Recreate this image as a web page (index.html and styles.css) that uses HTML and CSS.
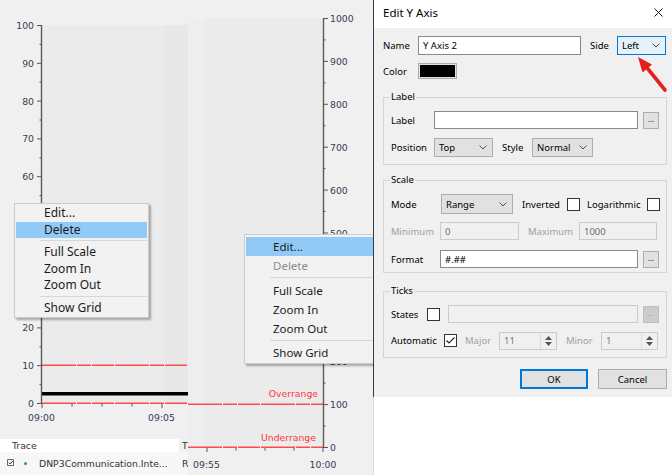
FILE: index.html
```html
<!DOCTYPE html>
<html lang="en">
<head>
<meta charset="utf-8">
<title>Edit Y Axis</title>
<link rel="stylesheet" href="styles.css">
</head>
<body>
<div class="screen">

  <section class="panel panel-left">
    <svg class="chart" width="188" height="439" viewBox="0 0 188 439">
      <rect x="42" y="25" width="146" height="378" fill="#ebebeb"/>
      <rect x="163" y="25" width="25" height="378" fill="#e8e8e8"/>
      <path class="limit" d="M42 365.2H188"/>
      <rect x="42" y="392" width="146" height="3.5" fill="#000"/>
      <path class="limit" d="M42 403.2H188"/>
      <path class="axis" d="M41.5 25V404"/>
      <path class="tick" d="M37 403.5H41M37 365.7H41M37 327.9H41M37 290.1H41M37 252.3H41M37 214.5H41M37 176.7H41M37 138.9H41M37 101.1H41M37 63.3H41M37 25.5H41"/>
      <path class="tick" d="M39.5 384.6H41M39.5 346.8H41M39.5 309H41M39.5 271.2H41M39.5 233.4H41M39.5 195.6H41M39.5 157.8H41M39.5 120H41M39.5 82.2H41M39.5 44.4H41"/>
      <path class="tick" d="M42 404v4M72 404v2.5M102 404v2.5M132 404v2.5M162 404v4"/>
      <text x="34" y="407" text-anchor="end">0</text>
      <text x="34" y="369.2" text-anchor="end">10</text>
      <text x="34" y="331.4" text-anchor="end">20</text>
      <text x="34" y="293.6" text-anchor="end">30</text>
      <text x="34" y="255.8" text-anchor="end">40</text>
      <text x="34" y="218" text-anchor="end">50</text>
      <text x="34" y="180.2" text-anchor="end">60</text>
      <text x="34" y="142.4" text-anchor="end">70</text>
      <text x="34" y="104.6" text-anchor="end">80</text>
      <text x="34" y="66.8" text-anchor="end">90</text>
      <text x="34" y="29" text-anchor="end">100</text>
      <text x="41.5" y="421" text-anchor="middle">09:00</text>
      <text x="161.5" y="421" text-anchor="middle">09:05</text>
    </svg>
    <div class="trace-table">
      <div class="trace-head">
        <span class="col-trace">Trace</span>
        <span class="col-t">T</span>
      </div>
      <div class="trace-row">
        <span class="col-trace">
          <svg class="trace-check" width="8" height="8" viewBox="0 0 8 8"><path d="M0.5 0.5H6.5V6.5H0.5Z" fill="#fff" stroke="#666"/><path d="M1.8 3.6L3.2 5L5.6 2" fill="none" stroke="#333" stroke-width="1"/></svg>
          <span class="trace-dot"></span>
          <span class="trace-name">DNP3Communication.Inte...</span>
        </span>
        <span class="col-t">R</span>
      </div>
    </div>

    <div class="ctx-menu menu-a">
      <div class="menu-item">Edit...</div>
      <div class="menu-item is-active">Delete</div>
      <div class="menu-sep"></div>
      <div class="menu-item">Full Scale</div>
      <div class="menu-item">Zoom In</div>
      <div class="menu-item">Zoom Out</div>
      <div class="menu-sep"></div>
      <div class="menu-item">Show Grid</div>
    </div>
  </section>

  <section class="panel panel-mid">
    <svg class="chart" width="185" height="475" viewBox="0 0 185 475">
      <rect x="0" y="19" width="135" height="428" fill="#ebebeb"/>
      <rect x="0" y="19" width="17" height="428" fill="#eeeeee"/>
      <path class="limit" d="M0 404.2H135"/>
      <path class="limit" d="M0 447.2H135"/>
      <path class="axis" d="M135.5 18V448"/>
      <path class="tick" d="M136 447.5H140M136 404.6H140M136 361.7H140M136 318.8H140M136 275.9H140M136 233H140M136 190.1H140M136 147.2H140M136 104.3H140M136 61.4H140M136 18.5H140"/>
      <path class="tick" d="M136 426H137.5M136 383.1H137.5M136 340.2H137.5M136 297.3H137.5M136 254.4H137.5M136 211.5H137.5M136 168.6H137.5M136 125.7H137.5M136 82.8H137.5M136 39.9H137.5"/>
      <path class="tick" d="M19 448v4M48 448v2.5M77 448v2.5M106 448v2.5M135 448v4"/>
      <text x="142" y="451">0</text>
      <text x="142" y="408.1">100</text>
      <text x="142" y="365.2">200</text>
      <text x="142" y="322.3">300</text>
      <text x="142" y="279.4">400</text>
      <text x="142" y="236.5">500</text>
      <text x="142" y="193.6">600</text>
      <text x="142" y="150.7">700</text>
      <text x="142" y="107.8">800</text>
      <text x="142" y="64.9">900</text>
      <text x="142" y="22">1000</text>
      <text class="warn" x="130" y="397" text-anchor="end">Overrange</text>
      <text class="warn" x="128" y="441" text-anchor="end">Underrange</text>
      <text x="18.5" y="468" text-anchor="middle">09:55</text>
      <text x="135" y="468" text-anchor="middle">10:00</text>
    </svg>

    <div class="ctx-menu menu-b">
      <div class="menu-item is-active">Edit...</div>
      <div class="menu-item is-disabled">Delete</div>
      <div class="menu-sep"></div>
      <div class="menu-item">Full Scale</div>
      <div class="menu-item">Zoom In</div>
      <div class="menu-item">Zoom Out</div>
      <div class="menu-sep sep-short"></div>
      <div class="menu-item">Show Grid</div>
    </div>
  </section>

  <section class="panel panel-right">
    <div class="dialog">
      <div class="titlebar">
        <span class="title">Edit Y Axis</span>
        <svg class="close-x" width="9" height="9" viewBox="0 0 9 9"><path d="M0.5 0.5L8.5 8.5M8.5 0.5L0.5 8.5" stroke="#111" stroke-width="1"/></svg>
      </div>
      <div class="dlg-body">
        <div class="row row-name">
          <span class="lbl lbl-name">Name</span>
          <div class="textbox tb-name">Y Axis 2</div>
          <span class="lbl lbl-side">Side</span>
          <div class="combo combo-focus combo-side"><span>Left</span><svg class="chev" width="8" height="5" viewBox="0 0 8 5"><path d="M0.5 0.5L4 4L7.5 0.5" fill="none" stroke="#444"/></svg></div>
        </div>
        <div class="row row-color">
          <span class="lbl lbl-name">Color</span>
          <div class="swatch"><span class="swatch-fill"></span></div>
        </div>

        <fieldset class="group group-label">
          <legend>Label</legend>
          <div class="row r18">
            <span class="lbl w43">Label</span>
            <div class="textbox tb-label"></div>
            <div class="dots">...</div>
          </div>
          <div class="row r19 mt9">
            <span class="lbl w43">Position</span>
            <div class="combo combo-pos"><span>Top</span><svg class="chev" width="8" height="5" viewBox="0 0 8 5"><path d="M0.5 0.5L4 4L7.5 0.5" fill="none" stroke="#555"/></svg></div>
            <span class="lbl lbl-style">Style</span>
            <div class="combo combo-style"><span>Normal</span><svg class="chev" width="8" height="5" viewBox="0 0 8 5"><path d="M0.5 0.5L4 4L7.5 0.5" fill="none" stroke="#555"/></svg></div>
          </div>
        </fieldset>

        <fieldset class="group group-scale">
          <legend>Scale</legend>
          <div class="row r20">
            <span class="lbl w50">Mode</span>
            <div class="combo combo-mode"><span>Range</span><svg class="chev" width="8" height="5" viewBox="0 0 8 5"><path d="M0.5 0.5L4 4L7.5 0.5" fill="none" stroke="#555"/></svg></div>
            <span class="lbl lbl-inv">Inverted</span>
            <span class="check"></span>
            <span class="lbl lbl-log">Logarithmic</span>
            <span class="check"></span>
          </div>
          <div class="row r18 mt8">
            <span class="lbl w49 is-off">Minimum</span>
            <div class="textbox tb-off tb-min">0</div>
            <span class="lbl lbl-max is-off">Maximum</span>
            <div class="textbox tb-off tb-max">1000</div>
          </div>
          <div class="row r18 mt10">
            <span class="lbl w49">Format</span>
            <div class="textbox tb-format">#.##</div>
            <div class="dots">...</div>
          </div>
        </fieldset>

        <fieldset class="group group-ticks">
          <legend>Ticks</legend>
          <div class="row r18">
            <span class="lbl w36">States</span>
            <span class="check"></span>
            <div class="textbox tb-off tb-states"></div>
            <div class="dots dots-off">...</div>
          </div>
          <div class="row r19 mt8">
            <span class="lbl w53">Automatic</span>
            <span class="check"><svg width="11" height="11" viewBox="0 0 11 11"><path d="M1.5 5.5L4 8L9.5 2.5" fill="none" stroke="#222" stroke-width="1.1"/></svg></span>
            <span class="lbl lbl-major is-off">Major</span>
            <div class="spin spin-major"><span class="spin-val">11</span><span class="spin-btns"><svg width="7" height="4" viewBox="0 0 7 4"><path d="M0 4L3.5 0L7 4Z" fill="#555"/></svg><svg width="7" height="4" viewBox="0 0 7 4"><path d="M0 0L3.5 4L7 0Z" fill="#555"/></svg></span></div>
            <span class="lbl lbl-minor is-off">Minor</span>
            <div class="spin spin-minor"><span class="spin-val">1</span><span class="spin-btns"><svg width="7" height="4" viewBox="0 0 7 4"><path d="M0 4L3.5 0L7 4Z" fill="#555"/></svg><svg width="7" height="4" viewBox="0 0 7 4"><path d="M0 0L3.5 4L7 0Z" fill="#555"/></svg></span></div>
          </div>
        </fieldset>

        <div class="buttons">
          <div class="btn btn-default">OK</div>
          <div class="btn">Cancel</div>
        </div>
      </div>
    </div>
    <div class="below"></div>
    <svg class="callout-arrow" width="42" height="45" viewBox="0 0 42 45">
      <path d="M35 40L18 19" stroke="#e3201f" stroke-width="3.6" stroke-linecap="round"/>
      <path d="M8 7L22 14.5L12.5 22.5Z" fill="#e3201f"/>
    </svg>
  </section>

</div>
</body>
</html>
```

FILE: styles.css
```css
* { box-sizing: border-box; }

html, body {
  margin: 0;
  padding: 0;
  background: #ffffff;
}

body {
  width: 672px;
  height: 475px;
  overflow: hidden;
  font-family: "Noto Sans", "Liberation Sans", sans-serif;
  color: #000;
}

.screen {
  display: flex;
  width: 672px;
  height: 475px;
}

.panel {
  position: relative;
  flex: none;
  height: 475px;
  background: #f0f0f0;
}

.panel-left {
  width: 188px;
  display: flex;
  flex-direction: column;
}

.panel-mid {
  width: 185px;
  overflow: hidden;
}

.panel-right {
  width: 299px;
  display: flex;
  flex-direction: column;
  background: #ffffff;
}

/* ---------- charts ---------- */
.chart { display: block; flex: none; }

.chart text {
  font-family: "DejaVu Sans", Verdana, sans-serif;
  font-size: 9.3px;
  fill: #3a3a55;
}

.chart .warn { fill: #ff3447; }

.chart .axis {
  stroke: #5a5a5a;
  stroke-width: 1.4;
  fill: none;
}

.chart .tick {
  stroke: #555;
  stroke-width: 1;
  fill: none;
}

.chart .limit {
  stroke: #ff4a4a;
  stroke-width: 1.5;
  stroke-dasharray: 34 1 14 1 22 1;
  fill: none;
}

/* ---------- trace table ---------- */
.trace-table {
  font-family: "DejaVu Sans", Verdana, sans-serif;
  font-size: 9.3px;
  color: #333;
}

.trace-head {
  display: flex;
  height: 13px;
  align-items: center;
}

.trace-head .col-trace {
  background: #fff;
  height: 13px;
  line-height: 13px;
  padding-left: 12px;
}

.trace-row {
  display: flex;
  height: 23px;
  align-items: center;
  background: #f7f7f7;
}

.col-trace {
  width: 179px;
  display: flex;
  align-items: center;
}

.col-t {
  width: 9px;
  padding-left: 3px;
}

.trace-row .col-trace { padding-left: 7px; }

.trace-check { flex: none; margin-top: -1px; }

.trace-dot {
  width: 3px;
  height: 3px;
  border-radius: 50%;
  background: #22a33a;
  margin-left: 9px;
  flex: none;
}

.trace-name { margin-left: 12px; white-space: nowrap; }

/* ---------- context menus ---------- */
.ctx-menu {
  position: absolute;
  background: #f2f2f2;
  border: 1px solid #cccccc;
  box-shadow: 2px 2px 2px rgba(0, 0, 0, 0.3);
  color: #1b1b1b;
  white-space: nowrap;
}

.menu-a {
  left: 14px;
  top: 203px;
  width: 135px;
  padding: 1px 1px;
  font-size: 12px;
}

.menu-a .menu-item {
  height: 16.5px;
  line-height: 16.5px;
  padding-left: 28px;
}

.menu-b {
  left: 56px;
  top: 234px;
  width: 131px;
  padding: 2px 1px 1px;
  font-size: 11.5px;
}

.menu-b .menu-item {
  height: 19px;
  line-height: 19px;
  padding-left: 27px;
}

.menu-item.is-active { background: #91c9f7; }
.menu-item.is-disabled { color: #8b8b8b; }

.menu-sep {
  height: 6px;
  position: relative;
}

.menu-sep::after {
  content: "";
  position: absolute;
  left: 24px;
  right: 0;
  top: 2px;
  border-top: 1px solid #d7d7d7;
}

.menu-sep.sep-short { height: 5px; }

/* ---------- dialog ---------- */
.dialog {
  height: 397px;
  flex: none;
  background: #f0f0f0;
  border-left: 1px solid #3c3c3c;
  font-size: 9.5px;
}

.below {
  flex: 1;
  border-left: 1px solid #d4d4d4;
}

.titlebar {
  height: 28px;
  background: #ffffff;
  display: flex;
  justify-content: space-between;
  align-items: flex-start;
  padding: 5px 9px 0 9px;
}

.title {
  font-size: 11.5px;
  line-height: 16px;
}

.close-x { margin-top: 3px; }

.dlg-body {
  padding: 8px 5px 0 9px;
}

.row {
  display: flex;
  align-items: center;
  flex: none;
}

.lbl {
  flex: none;
  white-space: nowrap;
  line-height: 13px;
}

.lbl.is-off { color: #a0a0a0; }

.row-name { height: 19px; }
.row-color { height: 16px; margin-top: 8px; }

.lbl-name { width: 35px; }
.lbl-side { width: 27px; margin-left: 9px; }
.w43 { width: 43px; }
.w50 { width: 50px; }
.w49 { width: 49px; }
.w36 { width: 36px; }
.w53 { width: 53px; }

.r18 { height: 18px; }
.r19 { height: 19px; }
.r20 { height: 20px; }
.mt8 { margin-top: 8px; }
.mt9 { margin-top: 9px; }
.mt10 { margin-top: 10px; }

.textbox {
  flex: none;
  height: 100%;
  background: #ffffff;
  border: 1px solid #8a8a8a;
  padding-left: 4px;
  display: flex;
  align-items: center;
  white-space: nowrap;
}

.textbox.tb-off {
  background: #f0f0f0;
  border-color: #cccccc;
  color: #6d6d6d;
}

.tb-name { width: 163px; }
.tb-label { width: 204px; }
.tb-min { width: 79px; }
.tb-max { width: 78px; }
.tb-format { width: 198px; }
.tb-states { width: 190px; margin-left: 8px; }

.combo {
  flex: none;
  height: 100%;
  background: #e1e1e1;
  border: 1px solid #adadad;
  padding: 0 5px 0 4px;
  display: flex;
  align-items: center;
  justify-content: space-between;
}

.combo-focus {
  background: #e5f1fb;
  border-color: #0078d7;
}

.combo-side { width: 49px; }
.combo-pos { width: 59px; }
.combo-style { width: 61px; }
.combo-mode { width: 72px; }

.lbl-style { width: 30px; margin-left: 9px; }
.lbl-inv { width: 45px; margin-left: 9px; }
.lbl-log { width: 60px; margin-left: 7px; }
.lbl-max { width: 51px; margin-left: 9px; }
.lbl-major { width: 34px; margin-left: 8px; }
.lbl-minor { width: 35px; margin-left: 9px; }

.chev { flex: none; }

.swatch {
  width: 39px;
  height: 16px;
  border: 1px solid #adadad;
  background: #e1e1e1;
  padding: 1px;
  display: flex;
}

.swatch-fill {
  flex: 1;
  background: #000;
}

.dots {
  flex: none;
  width: 16px;
  height: 17px;
  margin-left: 5px;
  background: #e1e1e1;
  border: 1px solid #adadad;
  font-size: 8px;
  line-height: 11px;
  text-align: center;
  color: #222;
}

.dots.dots-off {
  background: #cccccc;
  border-color: #bfbfbf;
  color: #a3a3a3;
}

.check {
  flex: none;
  width: 13px;
  height: 13px;
  background: #ffffff;
  border: 1px solid #333333;
  display: flex;
}

.group {
  margin: 12px 0 0;
  padding: 8px 7px 7px;
  border: 1px solid #d5d5d5;
  min-width: 0;
}

.group legend {
  padding: 0 1px;
  margin-left: -1px;
  line-height: 12px;
  font-size: 9.5px;
}

.group-scale { margin-top: 9px; padding-bottom: 4px; }
.group-ticks { margin-top: 12px; }

.spin {
  flex: none;
  height: 18px;
  display: flex;
  background: #f0f0f0;
  border: 1px solid #cccccc;
}

.spin-major { width: 58px; }
.spin-minor { width: 57px; }

.spin-val {
  flex: 1;
  padding-left: 4px;
  line-height: 16px;
  color: #7a7a7a;
}

.spin-btns {
  width: 16px;
  display: flex;
  flex-direction: column;
  justify-content: space-around;
  align-items: center;
  border-left: 1px solid #dcdcdc;
  padding: 2px 0;
}

.buttons {
  display: flex;
  justify-content: flex-end;
  gap: 10px;
  margin-top: 11px;
  padding-right: 0;
}

.btn {
  width: 69px;
  height: 20px;
  background: #e1e1e1;
  border: 1px solid #adadad;
  display: flex;
  align-items: center;
  justify-content: center;
}

.btn-default {
  width: 68px;
  border: 2px solid #0078d7;
}

/* ---------- callout arrow ---------- */
.callout-arrow {
  position: absolute;
  left: 257px;
  top: 50px;
}
```
